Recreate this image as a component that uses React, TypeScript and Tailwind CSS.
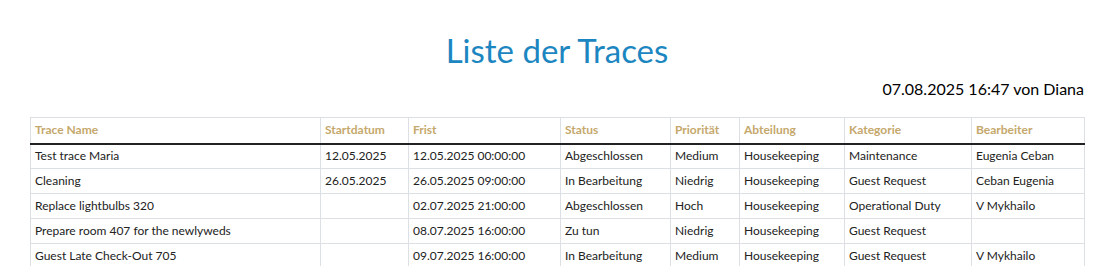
import React from 'react'

const columns = [
  { label: 'Trace Name', width: 'w-[290px]' },
  { label: 'Startdatum', width: 'w-[88px]' },
  { label: 'Frist', width: 'w-[152px]' },
  { label: 'Status', width: 'w-[110px]' },
  { label: 'Priorität', width: 'w-[69px]' },
  { label: 'Abteilung', width: 'w-[105px]' },
  { label: 'Kategorie', width: 'w-[127px]' },
  { label: 'Bearbeiter', width: 'w-[113px]' },
]

const rows = [
  ['Test trace Maria', '12.05.2025', '12.05.2025 00:00:00', 'Abgeschlossen', 'Medium', 'Housekeeping', 'Maintenance', 'Eugenia Ceban'],
  ['Cleaning', '26.05.2025', '26.05.2025 09:00:00', 'In Bearbeitung', 'Niedrig', 'Housekeeping', 'Guest Request', 'Ceban Eugenia'],
  ['Replace lightbulbs 320', '', '02.07.2025 21:00:00', 'Abgeschlossen', 'Hoch', 'Housekeeping', 'Operational Duty', 'V Mykhailo'],
  ['Prepare room 407 for the newlyweds', '', '08.07.2025 16:00:00', 'Zu tun', 'Niedrig', 'Housekeeping', 'Guest Request', ''],
  ['Guest Late Check-Out 705', '', '09.07.2025 16:00:00', 'In Bearbeitung', 'Medium', 'Housekeeping', 'Guest Request', 'V Mykhailo'],
]

export default function App() {
  return (
    <div className="bg-white font-['Lato','Liberation_Sans',sans-serif] pl-[30px] pr-[19px] pt-[28px] pb-4 text-[#222]">
      {/* Title */}
      <h1 className="text-center text-[33px] leading-[44px] text-[#1c86c1]">Liste der Traces</h1>

      {/* Timestamp */}
      <div className="text-right text-[16px] leading-[22px] text-black mt-[6px]">
        07.08.2025 16:47 von Diana
      </div>

      <table className="mt-[17px] w-full border-collapse table-fixed text-[12px]">
        <thead>
          <tr>
            {columns.map((c) => (
              <th
                key={c.label}
                className={`${c.width} border border-[#dcdfe3] border-b-[#222] border-b-2 px-[4px] h-[26px] text-left font-bold text-[#c5a86c]`}
              >
                {c.label}
              </th>
            ))}
          </tr>
        </thead>
        <tbody>
          {rows.map((r, i) => (
            <tr key={i}>
              {r.map((cell, j) => (
                <td key={j} className="border border-[#dcdfe3] px-[4px] h-[25px] whitespace-nowrap">
                  {cell}
                </td>
              ))}
            </tr>
          ))}
        </tbody>
      </table>
    </div>
  )
}
